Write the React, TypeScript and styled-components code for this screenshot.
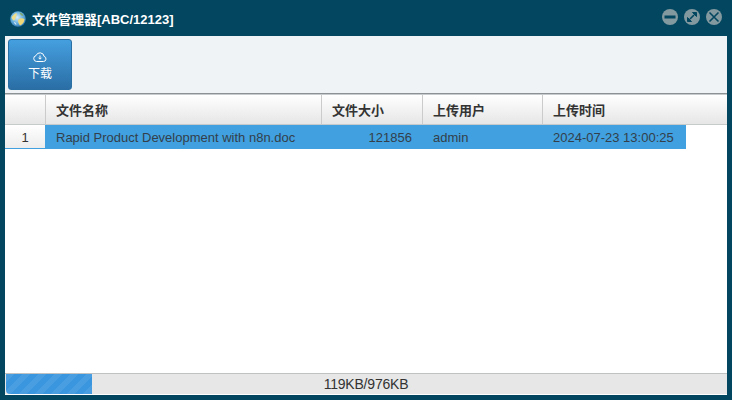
import React from "react";
import styled, { createGlobalStyle } from "styled-components";

const GlobalStyle = createGlobalStyle`
  html, body {
    margin: 0;
    padding: 0;
    height: 100%;
    background: #02465f;
    font-family: "Liberation Sans", "Noto Sans CJK SC", sans-serif;
  }
`

const WindowFrame = styled.div`
  width: 732px;
  height: 400px;
  box-sizing: border-box;
  padding: 0 5px 5px 5px;
  background: #02465f;
  display: flex;
  flex-direction: column;
  overflow: hidden;
`
const TitleBar = styled.div`
  height: 36px;
  flex: none;
  display: flex;
  align-items: center;
  padding: 0 5px 0 5px;
`
const TitleText = styled.div`
  margin-left: 6px;
  font-size: 13px;
  font-weight: 700;
  color: #ffffff;
  white-space: nowrap;
`
const GlobeWrap = styled.div`
  display: flex;
  margin-top: 2px;
`
const WindowButtons = styled.div`
  margin-left: auto;
  margin-bottom: 2px;
  display: flex;
  gap: 6px;
`
const WindowButton = styled.div`
  width: 16px;
  height: 16px;
  border-radius: 50%;
  background: #82999f;
  display: flex;
  align-items: center;
  justify-content: center;
`
const Body = styled.div`
  flex: 1;
  min-height: 0;
  display: flex;
  flex-direction: column;
  background: #ffffff;
`
const Toolbar = styled.div`
  height: 58px;
  flex: none;
  box-sizing: border-box;
  padding: 3px;
  background: #eff3f5;
  border-bottom: 1px solid #8c9194;
`
const ToolButton = styled.button`
  width: 64px;
  height: 51px;
  box-sizing: border-box;
  padding: 11px 0 0;
  display: flex;
  flex-direction: column;
  align-items: center;
  gap: 4px;
  color: #ffffff;
  font-family: inherit;
  font-size: 12px;
  line-height: 14px;
  border: 1px solid #2a6fa3;
  border-radius: 3px;
  background: linear-gradient(to bottom, #459fdf, #2a6ea5);
`
const HeaderRow = styled.div`
  height: 31px;
  flex: none;
  box-sizing: border-box;
  display: flex;
  border-top: 1px solid #c8cbcd;
  border-bottom: 1px solid #c6cacb;
  background: linear-gradient(to bottom, #ffffff, #e6e6e6);
`
const HeaderCell = styled.div<{ $w: number; $last?: boolean }>`
  width: ${(p) => p.$w}px;
  flex: ${(p) => (p.$last ? "1" : "none")};
  box-sizing: border-box;
  padding-left: 10px;
  display: flex;
  align-items: center;
  border-right: ${(p) => (p.$last ? "none" : "1px solid #cbcbcb")};
  font-size: 13px;
  font-weight: 700;
  color: #333333;
`
const DataRow = styled.div`
  height: 24px;
  flex: none;
  display: flex;
`
const IndexCell = styled.div`
  width: 40px;
  box-sizing: border-box;
  flex: none;
  padding-top: 1px;
  display: flex;
  align-items: center;
  justify-content: center;
  font-size: 13px;
  color: #333333;
  background: linear-gradient(to bottom, #ffffff, #ececec);
  border-bottom: 1px solid #40a0e0;
`
const DataCells = styled.div`
  display: flex;
  background: #41a0df;
`
const DataCell = styled.div<{ $w: number; $right?: boolean }>`
  width: ${(p) => p.$w}px;
  flex: none;
  box-sizing: border-box;
  padding: 1px 10px 0 11px;
  display: flex;
  align-items: center;
  justify-content: ${(p) => (p.$right ? "flex-end" : "flex-start")};
  font-size: 13px;
  color: #333f4a;
  white-space: nowrap;
`
const Spacer = styled.div`
  flex: 1;
`
const StatusBar = styled.div`
  position: relative;
  height: 22px;
  flex: none;
  box-sizing: border-box;
  border-top: 1px solid #bfc2c1;
  border-bottom: 1px solid #ffffff;
  background: #e7e7e7;
  display: flex;
  align-items: center;
  justify-content: center;
`
const ProgressFill = styled.div`
  position: absolute;
  left: 1px;
  top: 0;
  bottom: 0;
  border-radius: 0 0 0 4px;
  background-color: #3a97df;
  background-image: linear-gradient(
    135deg,
    rgba(255, 255, 255, 0.07) 25%,
    transparent 25%,
    transparent 50%,
    rgba(255, 255, 255, 0.07) 50%,
    rgba(255, 255, 255, 0.07) 75%,
    transparent 75%
  );
  background-size: 16px 16px;
`
const StatusText = styled.div`
  position: relative;
  font-size: 14px;
  letter-spacing: -0.2px;
  color: #333333;
`

const GlobeIcon = () => (
  <svg width="16" height="16" viewBox="0 0 16 16">
    <defs>
      <radialGradient id="globeSea" cx="45%" cy="40%" r="65%">
        <stop offset="0%" stopColor="#d8eef8" />
        <stop offset="60%" stopColor="#62acdc" />
        <stop offset="100%" stopColor="#2a6fa8" />
      </radialGradient>
    </defs>
    <circle cx="8" cy="8" r="7.8" fill="url(#globeSea)" />
    <path d="M1.5 6c1.5-1 2.5-3.5 5-4 1 2-.5 3-1 5s-1.5 3-2.5 2-1.5-2-1.5-3z" fill="#eedd8a" />
    <path d="M8.5 8.5c2-1.5 4-1.5 6-.5 0 3-2 5.5-4.5 6.5-1.5-2-2.5-4-1.5-6z" fill="#f0d878" />
    <path d="M9.5 1.5c1.5 0 3.5 1.5 4 3.5-1.5 0-3.5-1-4-3.5z" fill="#7fa86c" />
    <path d="M4 11c1 0 2 1 2.5 3-1.2-.3-2.2-1.5-2.5-3z" fill="#ffffff" opacity="0.8" />
  </svg>
);

const CloudDownloadIcon = () => (
  <svg width="14" height="12" viewBox="0 0 14 12" fill="none" stroke="#ffffff" strokeWidth="1">
    <path d="M3.5 10.5h7a2.6 2.6 0 0 0 .6-5.1A4.2 4.2 0 0 0 3 4.6a3 3 0 0 0 .5 5.9z" />
    <path d="M7 4.5v3.5M5.5 6.7 7 8.2l1.5-1.5" />
  </svg>
);

const MinimizeIcon = () => (
  <svg width="12" height="12" viewBox="0 0 12 12">
    <rect x="0.5" y="4.5" width="11" height="3" fill="#02465f" />
  </svg>
);
const MaximizeIcon = () => (
  <svg width="12" height="12" viewBox="0 0 12 12" fill="#02465f" stroke="#02465f" strokeWidth="1">
    <path d="M6.5 1.5h4v4z" />
    <path d="M5.5 10.5h-4v-4z" />
    <path d="M4 8l4-4" strokeWidth="1.6" />
  </svg>
);
const CloseIcon = () => (
  <svg width="12" height="12" viewBox="0 0 12 12" stroke="#02465f" strokeWidth="1.6">
    <path d="M1.5 1.5l9 9M10.5 1.5l-9 9" />
  </svg>
);

const columns = [276, 101, 120, 143];

export default function App() {
  return (
    <WindowFrame>
      <GlobalStyle />
      <TitleBar>
        <GlobeWrap><GlobeIcon /></GlobeWrap>
        <TitleText>文件管理器[ABC/12123]</TitleText>
        <WindowButtons>
          <WindowButton><MinimizeIcon /></WindowButton>
          <WindowButton><MaximizeIcon /></WindowButton>
          <WindowButton><CloseIcon /></WindowButton>
        </WindowButtons>
      </TitleBar>
      <Body>
        <Toolbar>
          <ToolButton>
            <CloudDownloadIcon />
            下载
          </ToolButton>
        </Toolbar>
        <HeaderRow>
          <HeaderCell $w={41} />
          <HeaderCell $w={columns[0]}>文件名称</HeaderCell>
          <HeaderCell $w={columns[1]}>文件大小</HeaderCell>
          <HeaderCell $w={columns[2]}>上传用户</HeaderCell>
          <HeaderCell $w={columns[3]} $last>上传时间</HeaderCell>
        </HeaderRow>
        <DataRow>
          <IndexCell>1</IndexCell>
          <DataCells>
            <DataCell $w={columns[0]}>Rapid Product Development with n8n.doc</DataCell>
            <DataCell $w={columns[1]} $right>121856</DataCell>
            <DataCell $w={columns[2]}>admin</DataCell>
            <DataCell $w={columns[3] + 1}>2024-07-23 13:00:25</DataCell>
          </DataCells>
        </DataRow>
        <Spacer />
        <StatusBar>
          <ProgressFill style={{ width: `${(119 / 976) * 100 - 0.3}%` }} />
          <StatusText>119KB/976KB</StatusText>
        </StatusBar>
      </Body>
    </WindowFrame>
  );
}
